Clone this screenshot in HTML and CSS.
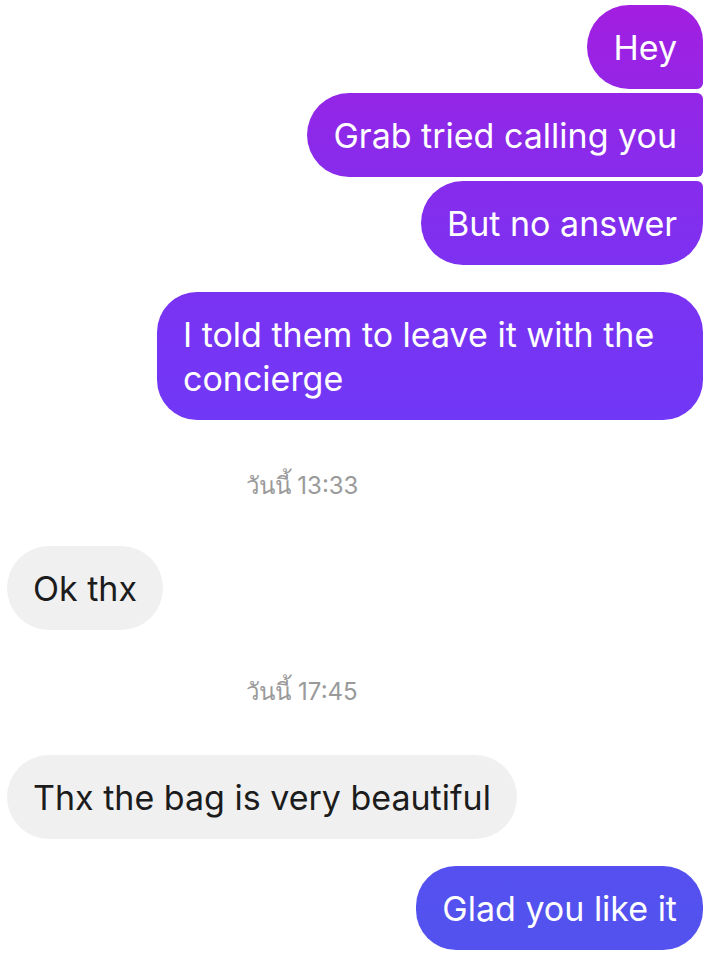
FILE: index.html
```html
<!DOCTYPE html>
<html lang="th">
<head>
    <meta charset="UTF-8">
    <meta name="viewport" content="width=device-width, initial-scale=1.0">
    <title>Chat</title>
    <link rel="stylesheet" href="styles.css">
</head>
<body>
    <div class="chat">
        <div class="group sent">
            <div class="bubble first">Hey</div>
            <div class="bubble middle">Grab tried calling you</div>
            <div class="bubble last">But no answer</div>
        </div>
        <div class="group sent gap-small">
            <div class="bubble single wide">I told them to leave it with the concierge</div>
        </div>

        <div class="timestamp ts-first">วันนี้ 13:33</div>

        <div class="group received">
            <div class="bubble">Ok thx</div>
        </div>

        <div class="timestamp ts-second">วันนี้ 17:45</div>

        <div class="group received">
            <div class="bubble">Thx the bag is very beautiful</div>
        </div>
        <div class="group sent gap-small">
            <div class="bubble single">Glad you like it</div>
        </div>
    </div>
</body>
</html>
```

FILE: styles.css
```css
body {
    margin: 0;
    background: #fff;
    font-family: Inter, Roboto, "Noto Sans", "DejaVu Sans", sans-serif;
}
.chat {
    display: flex;
    flex-direction: column;
    padding: 5px 17px 8px 7px;
}
.group {
    display: flex;
    flex-direction: column;
    gap: 4px;
}
.group.sent {
    align-items: flex-end;
}
.group.received {
    align-items: flex-start;
}
.gap-small {
    margin-top: 27px;
}
.bubble {
    font-size: 34px;
    line-height: 44px;
    padding: 21px 26px 19px;
    border-radius: 42px;
}
.sent .bubble {
    color: #fff;
    background-image: linear-gradient(180deg, #a41ee0 0%, #8d29e9 14%, #7c31f1 28%, #7237f6 42%, #6241f3 65%, #5352ef 95%);
    background-attachment: fixed;
}
.received .bubble {
    color: #1c1c1c;
    background: #f0f0f0;
}
.bubble.first {
    border-radius: 42px 36px 6px 42px;
}
.bubble.middle {
    border-radius: 42px 6px 6px 42px;
}
.bubble.last {
    border-radius: 42px 6px 42px 42px;
}
.bubble.single {
    border-radius: 40px;
}
.bubble.wide {
    width: 494px;
}
.timestamp {
    font-size: 24px;
    line-height: 30px;
    color: #9a9a9a;
    text-align: center;
    padding-right: 106px;
}
.ts-first {
    margin: 51px 0 45px;
}
.ts-second {
    margin: 47px 0 48px;
}
```
